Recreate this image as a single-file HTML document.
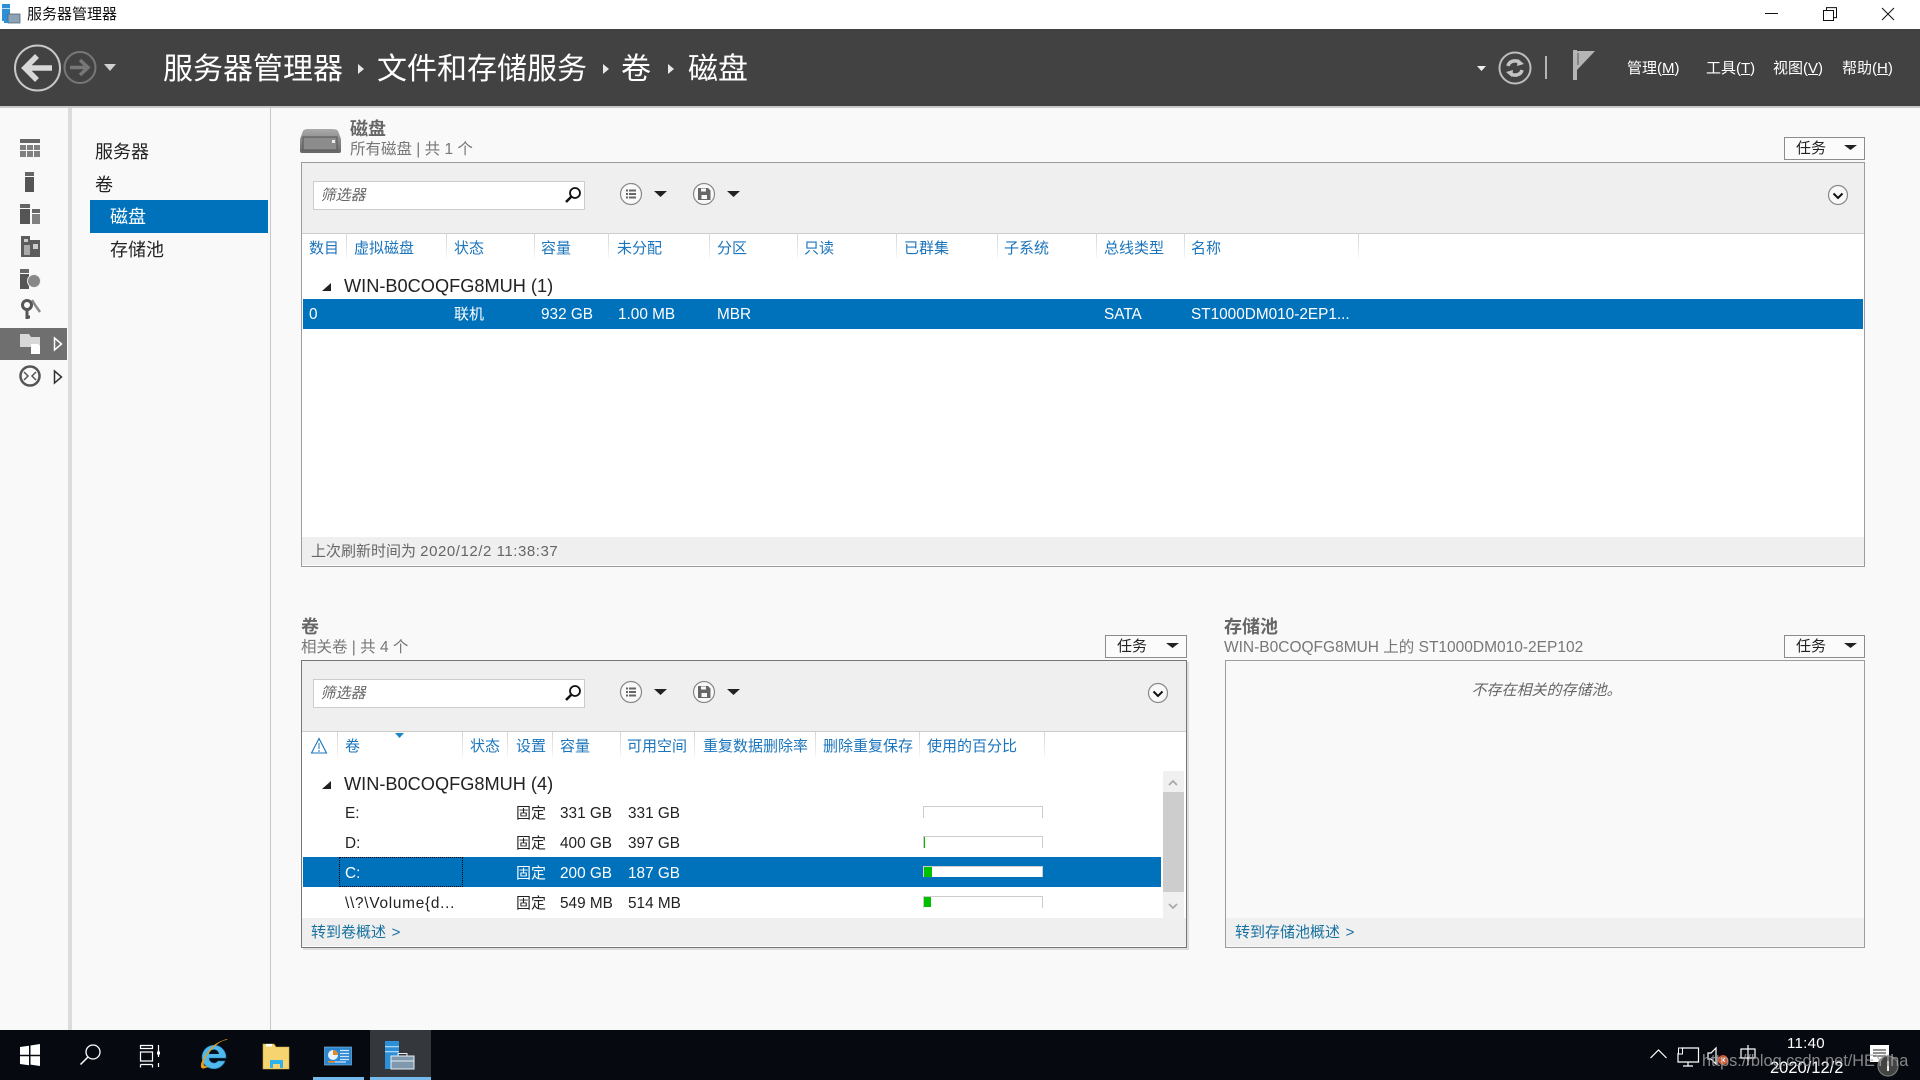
<!DOCTYPE html>
<html lang="zh"><head><meta charset="utf-8"><title>服务器管理器</title>
<style>
html,body{margin:0;padding:0;width:1920px;height:1080px;overflow:hidden;background:#f9f9f9}
body{position:relative;font-family:"Liberation Sans","Noto Sans CJK SC",sans-serif;font-size:15px;color:#222}
.a{position:absolute}
.t{position:absolute;white-space:nowrap;height:20px;line-height:20px;margin-top:1px}
.h{color:#1b75bc}
.w{color:#fff}
.r{font-size:15.35px}
.i{transform:skewX(-14deg);transform-origin:0 100%}
.big{font-size:30px;height:30px;line-height:30px;color:#fff;top:54px}
.grp{font-size:18.2px;color:#222}
.sep{position:absolute;width:1px;height:25px;background:linear-gradient(#d4d4d4,#f6f6f6)}
.ttl{font-size:18px;font-weight:bold;color:#666}
.sub{color:#777;font-size:15.5px}
.btn{position:absolute;box-sizing:border-box;height:23px;border:1px solid #8c8c8c;background:#fbfbfb}
.link{color:#16719f;word-spacing:1.5px}
svg{position:absolute;overflow:visible}
u{text-underline-offset:1px}
.bar{position:absolute;box-sizing:border-box;left:923px;width:120px;height:12px;border:1px solid #ccc;border-bottom:0}
.g{position:absolute;background:#00c000}
</style></head><body>

<!-- title bar -->
<div class="a" style="left:0;top:0;width:1920px;height:29px;background:#fff"></div>
<svg style="left:0;top:0" width="30" height="29"><rect x="2" y="4" width="8" height="17" fill="#2d8fd5"/><rect x="2" y="8" width="8" height="1" fill="#bfe0f7"/><rect x="8" y="14" width="12" height="9" fill="#8da3b5" stroke="#567" stroke-width=".8"/><rect x="4" y="21" width="5" height="2" fill="#2d8fd5"/></svg>
<span class="t" style="left:27px;top:4px;font-size:15px;color:#111">服务器管理器</span>
<svg style="left:1760px;top:0" width="150" height="29" fill="none" stroke="#111" stroke-width="1"><path d="M5 13.5H18"/><path d="M63.500 10.500h10v10h-10z M66.500 10.500v-2.900h10v10h-3"/><path d="M122 8l12 12M134 8l-12 12"/></svg>

<!-- header -->
<div class="a" style="left:0;top:29px;width:1920px;height:77px;background:#424242"></div>
<div class="a" style="left:0;top:106px;width:1920px;height:2px;background:#c9c9c9"></div>
<svg style="left:0;top:29px" width="130" height="77" fill="none">
<circle cx="37.500" cy="39" r="22.500" stroke="#c8c8c8" stroke-width="2"/>
<path d="M52 39H27M37 27L25 39l12 12" stroke="#d8d8d8" stroke-width="5.500"/>
<circle cx="80" cy="38.500" r="15.500" stroke="#777" stroke-width="2"/>
<path d="M70 38.500H87M80 31l8 7.500-8 7.500" stroke="#777" stroke-width="3.500"/>
<path d="M104 35h12l-6 7z" fill="#d0d0d0"/>
</svg>
<span class="t big" style="left:163px">服务器管理器</span>
<span class="t big" style="left:377px">文件和存储服务</span>
<span class="t big" style="left:621px">卷</span>
<span class="t big" style="left:688px">磁盘</span>
<svg style="left:0;top:29px" width="700" height="77" fill="#e8e8e8"><path d="M358 35l6 5-6 5zM603 35l6 5-6 5zM668 35l6 5-6 5z"/></svg>

<svg style="left:1470px;top:29px" width="130" height="77" fill="none">
<path d="M7 37h9l-4.500 5z" fill="#eee"/>
<circle cx="45" cy="39" r="15.500" stroke="#bdbdbd" stroke-width="2"/>
<path d="M38 37c1-5 8-7 12-3M52 41c-1 5-8 7-12 3" stroke="#c4c4c4" stroke-width="3.500"/>
<path d="M48 30l6 5-7 2zM42 48l-6-5 7-2z" fill="#c4c4c4"/>
<rect x="75" y="27" width="2" height="23" fill="#b5b5b5"/>
<rect x="103" y="21" width="4" height="30" fill="#b5b5b5"/>
<path d="M107 22h18l-18 19z" fill="#b5b5b5"/>
<path d="M108 24v12" stroke="#555"/>
</svg>
<span class="t w" style="left:1627px;top:58px">管理(<u>M</u>)</span>
<span class="t w" style="left:1706px;top:58px">工具(<u>T</u>)</span>
<span class="t w" style="left:1773px;top:58px">视图(<u>V</u>)</span>
<span class="t w" style="left:1842px;top:58px">帮助(<u>H</u>)</span>

<!-- left icon rail -->
<div class="a" style="left:0;top:108px;width:68px;height:922px;background:#f9f9f9"></div>
<div class="a" style="left:68px;top:108px;width:4px;height:922px;background:#dcdcdc"></div>
<div class="a" style="left:270px;top:108px;width:1px;height:922px;background:#c8c8c8"></div>
<div class="a" style="left:0;top:328px;width:67px;height:32px;background:#6f6f6f"></div>
<svg style="left:0;top:108px" width="68" height="290">
<g fill="#666">
<rect x="20" y="31" width="20" height="4"/>
<rect x="20" y="37" width="6" height="5" fill="#808080"/><rect x="27" y="37" width="6" height="5" fill="#808080"/><rect x="34" y="37" width="6" height="5" fill="#808080"/>
<rect x="20" y="43" width="6" height="6" fill="#808080"/><rect x="27" y="43" width="6" height="6" fill="#808080"/><rect x="34" y="43" width="6" height="6" fill="#808080"/>
<rect x="25" y="64" width="9" height="4"/><rect x="25" y="69" width="9" height="15" fill="#555"/>
<rect x="20" y="96" width="10" height="4"/><rect x="20" y="101" width="10" height="15" fill="#555"/>
<rect x="32" y="101" width="8" height="4"/><rect x="32" y="106" width="8" height="10" fill="#808080"/>
<path d="M21 128h9v4h10v17H21z" fill="#5c5c5c"/><rect x="24" y="131" width="4" height="3" fill="#ccc"/><rect x="33" y="136" width="5" height="5" fill="#ccc"/><rect x="24" y="137" width="6" height="10" fill="#aaa"/>
<rect x="20" y="161" width="9" height="4"/><rect x="20" y="166" width="9" height="15" fill="#555"/>
<circle cx="34" cy="173" r="6.500" fill="#888" stroke="#eee"/>
<circle cx="27" cy="197" r="4.500" fill="none" stroke="#555" stroke-width="3"/><path d="M27 202v9M27 209h3" stroke="#555" stroke-width="3" fill="none"/>
<path d="M32 192l3 5 5 7" stroke="#888" stroke-width="2.500" fill="none"/>
<path d="M20 226h9l2 3h9v16h-7v-6H20z" fill="#d8d8d8"/>
<path d="M31 236h7l2 2v8h-9z" fill="#fff"/>
<circle cx="30" cy="268" r="9.500" fill="none" stroke="#555" stroke-width="2.500"/>
<path d="M24 264l4 4-4 4M36 264l-4 4 4 4" fill="none" stroke="#555" stroke-width="1.500"/>
</g>
<path d="M54.500 230l7 6-7 6z" fill="none" stroke="#fff" stroke-width="1.500"/>
<path d="M54.500 263l7 6-7 6z" fill="none" stroke="#333" stroke-width="1.500"/>
</svg>

<!-- nav -->
<span class="t" style="left:95px;top:141px;font-size:18px;color:#222">服务器</span>
<span class="t" style="left:95px;top:174px;font-size:18px;color:#222">卷</span>
<div class="a" style="left:90px;top:200px;width:178px;height:33px;background:#0072bc"></div>
<span class="t w" style="left:110px;top:206px;font-size:18px">磁盘</span>
<span class="t" style="left:110px;top:239px;font-size:18px;color:#222">存储池</span>

<!-- disks panel -->
<svg style="left:300px;top:129px" width="42" height="26">
<defs><linearGradient id="dg" x1="0" y1="0" x2="0" y2="1"><stop offset="0" stop-color="#aaa"/><stop offset="1" stop-color="#666"/></linearGradient></defs>
<path d="M3 2Q4 0 8 0h24q5 0 6 2l3 8v12q0 2-2 2H2q-2 0-2-2V10z" fill="url(#dg)"/>
<rect x="3" y="8" width="34" height="13" fill="#8c8c8c" stroke="#555"/>
<rect x="32" y="11" width="3" height="3" fill="#eee"/>
</svg>
<span class="t ttl" style="left:350px;top:118px">磁盘</span>
<span class="t sub" style="left:350px;top:139px">所有磁盘 | 共 1 个</span>
<div class="btn" style="left:1784px;top:137px;width:81px"><span class="t" style="left:11px;top:0;color:#222">任务</span></div>
<svg style="left:1784px;top:137px" width="82" height="23"><path d="M60 8h13l-6.500 5z" fill="#222"/></svg>

<div class="a" style="left:301px;top:162px;width:1562px;height:403px;border:1px solid #9c9c9c;background:#fff"></div>
<div class="a" style="left:302px;top:163px;width:1562px;height:71px;background:#efefef;border-bottom:1px solid #ccc;box-sizing:border-box"></div>
<div class="a" style="left:302px;top:537px;width:1562px;height:28px;background:#efefef"></div>
<div class="a" style="left:313px;top:181px;width:270px;height:27px;background:#fff;border:1px solid #ccc"></div>
<span class="t i" style="left:319px;top:185px;color:#666">筛选器</span>
<svg style="left:560px;top:185px" width="26" height="22" fill="none"><circle cx="15" cy="8" r="5" stroke="#111" stroke-width="1.800"/><path d="M11 12l-5 5" stroke="#111" stroke-width="2.500"/></svg>
<svg style="left:615px;top:180px" width="130" height="30">
<circle cx="16" cy="14" r="10.500" fill="#f9f9f9" stroke="#888" stroke-width="1.200"/>
<path d="M11 9.500h2v2h-2zM11 13h2v2h-2zM11 16.500h2v2h-2zM14 9.500h7v2h-7zM14 13h7v2h-7zM14 16.500h7v2h-7z" fill="#666"/>
<path d="M39 11h13l-6.500 6z" fill="#222"/>
<circle cx="89" cy="14" r="10.500" fill="#f9f9f9" stroke="#888" stroke-width="1.200"/>
<path d="M83 8h10l2.500 2.500V20H83z" fill="#666"/><rect x="86" y="8.500" width="5" height="3" fill="#f9f9f9"/><rect x="86.500" y="15" width="5.500" height="4" fill="#f9f9f9"/>
<path d="M112 11h13l-6.500 6z" fill="#222"/>
</svg>
<svg style="left:1826px;top:183px" width="24" height="24" fill="none"><circle cx="12" cy="12" r="9.500" fill="#f9f9f9" stroke="#888" stroke-width="1.200"/><path d="M7.500 10.500l4.500 4.500 4.500-4.500" stroke="#111" stroke-width="2"/></svg>

<div class="sep" style="left:346px;top:233px"></div><div class="sep" style="left:446px;top:233px"></div><div class="sep" style="left:534px;top:233px"></div><div class="sep" style="left:608px;top:233px"></div><div class="sep" style="left:709px;top:233px"></div><div class="sep" style="left:797px;top:233px"></div><div class="sep" style="left:896px;top:233px"></div><div class="sep" style="left:997px;top:233px"></div><div class="sep" style="left:1096px;top:233px"></div><div class="sep" style="left:1184px;top:233px"></div><div class="sep" style="left:1358px;top:233px"></div>
<span class="t h" style="left:309px;top:238px">数目</span>
<span class="t h" style="left:354px;top:238px">虚拟磁盘</span>
<span class="t h" style="left:454px;top:238px">状态</span>
<span class="t h" style="left:541px;top:238px">容量</span>
<span class="t h" style="left:617px;top:238px">未分配</span>
<span class="t h" style="left:717px;top:238px">分区</span>
<span class="t h" style="left:804px;top:238px">只读</span>
<span class="t h" style="left:904px;top:238px">已群集</span>
<span class="t h" style="left:1004px;top:238px">子系统</span>
<span class="t h" style="left:1104px;top:238px">总线类型</span>
<span class="t h" style="left:1191px;top:238px">名称</span>

<svg style="left:320px;top:280px" width="14" height="14"><path d="M11 3v8H2z" fill="#222"/></svg>
<span class="t grp" style="left:344px;top:275px">WIN-B0COQFG8MUH (1)</span>
<div class="a" style="left:303px;top:299px;width:1560px;height:30px;background:#0072bc"></div>
<span class="t w r" style="left:309px;top:304px">0</span>
<span class="t w" style="left:454px;top:304px">联机</span>
<span class="t w r" style="left:541px;top:304px">932 GB</span>
<span class="t w r" style="left:618px;top:304px">1.00 MB</span>
<span class="t w r" style="left:717px;top:304px">MBR</span>
<span class="t w r" style="left:1104px;top:304px">SATA</span>
<span class="t w r" style="left:1191px;top:304px">ST1000DM010-2EP1...</span>
<span class="t" style="left:311px;top:541px;color:#666">上次刷新时间为 <span style="letter-spacing:.55px">2020/12/2 11:38:37</span></span>

<!-- volumes panel -->
<span class="t ttl" style="left:301px;top:616px">卷</span>
<span class="t sub" style="left:301px;top:637px">相关卷 | 共 4 个</span>
<div class="btn" style="left:1105px;top:635px;width:82px"><span class="t" style="left:11px;top:0;color:#222">任务</span></div>
<svg style="left:1105px;top:635px" width="82" height="23"><path d="M61 8h13l-6.500 5z" fill="#222"/></svg>

<div class="a" style="left:301px;top:660px;width:884px;height:286px;border:1px solid #777;background:#fff;box-shadow:2px 2px 0 #ddd"></div>
<div class="a" style="left:302px;top:661px;width:884px;height:71px;background:#efefef;border-bottom:1px solid #ccc;box-sizing:border-box"></div>
<div class="a" style="left:302px;top:918px;width:884px;height:28px;background:#efefef"></div>
<div class="a" style="left:313px;top:679px;width:270px;height:27px;background:#fff;border:1px solid #ccc"></div>
<span class="t i" style="left:319px;top:683px;color:#666">筛选器</span>
<svg style="left:560px;top:683px" width="26" height="22" fill="none"><circle cx="15" cy="8" r="5" stroke="#111" stroke-width="1.800"/><path d="M11 12l-5 5" stroke="#111" stroke-width="2.500"/></svg>
<svg style="left:615px;top:678px" width="130" height="30">
<circle cx="16" cy="14" r="10.500" fill="#f9f9f9" stroke="#888" stroke-width="1.200"/>
<path d="M11 9.500h2v2h-2zM11 13h2v2h-2zM11 16.500h2v2h-2zM14 9.500h7v2h-7zM14 13h7v2h-7zM14 16.500h7v2h-7z" fill="#666"/>
<path d="M39 11h13l-6.500 6z" fill="#222"/>
<circle cx="89" cy="14" r="10.500" fill="#f9f9f9" stroke="#888" stroke-width="1.200"/>
<path d="M83 8h10l2.500 2.500V20H83z" fill="#666"/><rect x="86" y="8.500" width="5" height="3" fill="#f9f9f9"/><rect x="86.500" y="15" width="5.500" height="4" fill="#f9f9f9"/>
<path d="M112 11h13l-6.500 6z" fill="#222"/>
</svg>
<svg style="left:1146px;top:681px" width="24" height="24" fill="none"><circle cx="12" cy="12" r="9.500" fill="#f9f9f9" stroke="#888" stroke-width="1.200"/><path d="M7.500 10.500l4.500 4.500 4.500-4.500" stroke="#111" stroke-width="2"/></svg>

<div class="sep" style="left:337px;top:732px"></div><div class="sep" style="left:462px;top:732px"></div><div class="sep" style="left:507px;top:732px"></div><div class="sep" style="left:552px;top:732px"></div><div class="sep" style="left:620px;top:732px"></div><div class="sep" style="left:694px;top:732px"></div><div class="sep" style="left:815px;top:732px"></div><div class="sep" style="left:919px;top:732px"></div><div class="sep" style="left:1044px;top:732px"></div>
<svg style="left:310px;top:737px" width="20" height="18" fill="none"><path d="M9 1.500L1.500 16h15z" stroke="#1b75bc" stroke-width="1.100"/><path d="M9 6v6M9 13v2" stroke="#1b75bc" stroke-width="1"/></svg>
<svg style="left:394px;top:732px" width="12" height="8"><path d="M1 1h9l-4.500 5z" fill="#1b87c9"/></svg>
<span class="t h" style="left:345px;top:736px">卷</span>
<span class="t h" style="left:470px;top:736px">状态</span>
<span class="t h" style="left:516px;top:736px">设置</span>
<span class="t h" style="left:560px;top:736px">容量</span>
<span class="t h" style="left:627px;top:736px">可用空间</span>
<span class="t h" style="left:703px;top:736px">重复数据删除率</span>
<span class="t h" style="left:823px;top:736px">删除重复保存</span>
<span class="t h" style="left:927px;top:736px">使用的百分比</span>

<svg style="left:320px;top:778px" width="14" height="14"><path d="M11 3v8H2z" fill="#222"/></svg>
<span class="t grp" style="left:344px;top:773px">WIN-B0COQFG8MUH (4)</span>

<div class="a" style="left:303px;top:857px;width:858px;height:30px;background:#0072bc"></div>
<div class="a" style="left:339px;top:857px;width:122px;height:28px;border:1px dotted #000"></div>

<span class="t r" style="left:345px;top:803px">E:</span>
<span class="t" style="left:516px;top:803px">固定</span>
<span class="t r" style="left:560px;top:803px">331 GB</span>
<span class="t r" style="left:628px;top:803px">331 GB</span>
<span class="t r" style="left:345px;top:833px">D:</span>
<span class="t" style="left:516px;top:833px">固定</span>
<span class="t r" style="left:560px;top:833px">400 GB</span>
<span class="t r" style="left:628px;top:833px">397 GB</span>
<span class="t w r" style="left:345px;top:863px">C:</span>
<span class="t w" style="left:516px;top:863px">固定</span>
<span class="t w r" style="left:560px;top:863px">200 GB</span>
<span class="t w r" style="left:628px;top:863px">187 GB</span>
<span class="t r" style="left:345px;top:893px;letter-spacing:.75px">\\?\Volume{d...</span>
<span class="t" style="left:516px;top:893px">固定</span>
<span class="t r" style="left:560px;top:893px">549 MB</span>
<span class="t r" style="left:628px;top:893px">514 MB</span>

<div class="bar" style="top:806px"></div>
<div class="bar" style="top:836px"></div><div class="g" style="left:924px;top:837px;width:1px;height:11px"></div>
<div class="bar" style="top:866px;background:#fff;height:11px"></div><div class="g" style="left:924px;top:867px;width:8px;height:10px"></div>
<div class="bar" style="top:896px"></div><div class="g" style="left:924px;top:897px;width:7px;height:10px"></div>

<div class="a" style="left:1163px;top:771px;width:21px;height:147px;background:#f0f0f0"></div>
<div class="a" style="left:1163px;top:792px;width:21px;height:100px;background:#cdcdcd"></div>
<svg style="left:1162px;top:771px" width="21" height="147" fill="none" stroke="#aaa" stroke-width="1.800"><path d="M7 14l4-4 4 4M7 133l4 4 4-4"/></svg>
<span class="t link" style="left:311px;top:922px">转到卷概述 &gt;</span>

<!-- pools panel -->
<span class="t ttl" style="left:1224px;top:616px">存储池</span>
<span class="t sub" style="left:1224px;top:637px">WIN-B0COQFG8MUH 上的 ST1000DM010-2EP102</span>
<div class="btn" style="left:1784px;top:635px;width:81px"><span class="t" style="left:11px;top:0;color:#222">任务</span></div>
<svg style="left:1784px;top:635px" width="82" height="23"><path d="M60 8h13l-6.500 5z" fill="#222"/></svg>
<div class="a" style="left:1225px;top:660px;width:638px;height:286px;border:1px solid #9c9c9c;background:#f9f9f9"></div>
<div class="a" style="left:1226px;top:918px;width:638px;height:28px;background:#f0f0f0"></div>
<span class="t i" style="left:1470px;top:680px;color:#666">不存在相关的存储池。</span>
<span class="t link" style="left:1235px;top:922px">转到存储池概述 &gt;</span>

<!-- taskbar -->
<div class="a" style="left:0;top:1030px;width:1920px;height:50px;background:#060a10"></div>
<div class="a" style="left:370px;top:1030px;width:61px;height:50px;background:#34383d"></div>
<div class="a" style="left:313px;top:1077px;width:51px;height:3px;background:#76b9ed"></div>
<div class="a" style="left:370px;top:1077px;width:61px;height:3px;background:#76b9ed"></div>
<svg style="left:0;top:1030px" width="440" height="50" fill="none">
<path d="M20 17l9-1.300v9H20zM30.500 15.500L40 14v10.700h-9.500zM20 26.200h9v9L20 34zM30.500 26.200H40V36l-9.500-1.400z" fill="#fff"/>
<circle cx="93" cy="22" r="7" stroke="#fff" stroke-width="1.300"/><path d="M88 27l-7.500 7.500" stroke="#fff" stroke-width="1.500"/>
<path d="M140.500 15.500h12v3h-12zM140.500 22h12v9h-12zM140.500 34.500h12M140.500 37.500v-3M152.500 37.500v-3M158.500 15v12M158.500 33v4" stroke="#fff" stroke-width="1.200"/>
<rect x="157" y="21.500" width="3" height="3" fill="#fff"/>
<g transform="translate(1 0)">
<path d="M202 32a12 12 0 1 1 23-4h-17a5 5 0 0 0 9 3h7a12 12 0 0 1-22 1z" fill="#4fb8ee" stroke="#1f7fb8" stroke-width=".6"/>
<path d="M208 25a5 5 0 0 1 10-1h-10z" fill="#06101a"/>
<path d="M226 10c3-2-7 0-14 6-7 7-13 16-12 21 1 3 5 1 9-1-5 1-7 0-6-4 1-6 9-15 15-19 3-2 6-3 8-3z" fill="#e8a01c"/>
</g>
<path d="M263 14h11l2 3h13v22h-26z" fill="#f6d46f" stroke="#c9a64a" stroke-width=".6"/>
<rect x="266" y="14" width="6" height="2.500" fill="#fff"/>
<path d="M270 30h13v8h-3v-5h-7v5h-3z" fill="#2fb1ee"/><rect x="270" y="30" width="13" height="4" fill="#2fb1ee"/>
<rect x="324.500" y="17" width="27" height="18" fill="#2b86d1" stroke="#8cc3ea" stroke-width=".6"/>
<circle cx="333" cy="25" r="5" fill="#e7f3fc"/><path d="M333 20a5 5 0 0 1 5 5h-5z" fill="#e58a1f"/>
<path d="M340 20.500h9M340 23.500h9M340 26.500h9M340 29.500h9M328 32h18" stroke="#cfe6f8" stroke-width="1.200"/>
<rect x="328" y="31" width="7" height="1.500" fill="#e58a1f"/>
<rect x="385" y="11" width="14" height="28" fill="#2d8fd5"/><rect x="385" y="16" width="14" height="1.300" fill="#a8d5f3"/><rect x="385" y="21" width="14" height="1.300" fill="#a8d5f3"/>
<rect x="391" y="26" width="23" height="13" fill="#7f98ad" stroke="#e6eef3" stroke-width="1"/>
<path d="M398 26v-2.500h9V26" stroke="#e6eef3" stroke-width="1"/><path d="M391 31h23" stroke="#e6eef3" stroke-width="1"/>
</svg>

<svg style="left:1640px;top:1030px" width="280" height="50" fill="none" stroke="#fff" stroke-width="1.200">
<path d="M10.500 28l8-8 8 8"/>
<path d="M41 18H58.500v14H38V23M48 32v4M43 36h10"/>
<rect x="38.500" y="18" width="4" height="6" stroke-width="1"/>
<path d="M68 23h3l5-5v16l-5-5h-3z"/>
<circle cx="83" cy="30" r="5" fill="#d4552e" stroke="none"/>
<path d="M81 28l4 4M85 28l-4 4" stroke="#fff" stroke-width="1"/>
<path d="M101 19h14v9h-14zM108 15v20"/>
<path d="M230 15h19v13l-9 3-1 1h-9z" fill="#fff" stroke="none"/>
<path d="M233 20h13M233 23h13M233 26h13" stroke="#222" stroke-width="1"/>
<circle cx="248" cy="36" r="10" fill="#444" stroke="#777"/>
<path d="M248 31v10" stroke="#fff" stroke-width="1.800"/>
</svg>
<span class="t" style="left:1787px;top:1033px;font-size:15px;color:#fff;letter-spacing:.3px">11:40</span>
<span class="t" style="left:1770px;top:1057px;font-size:16.500px;color:#fff">2020/12/2</span>
<span class="t" style="left:1702px;top:1050px;font-size:16.300px;color:rgba(165,165,165,.8)">https://blog.csdn.net/HEYIha</span>

</body></html>
